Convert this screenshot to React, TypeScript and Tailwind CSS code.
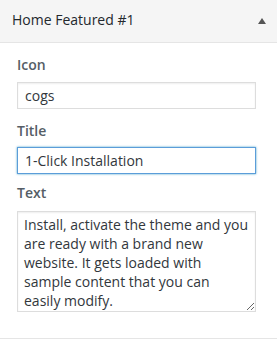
import React from "react";

const font = { fontFamily: '"Open Sans", "Noto Sans", sans-serif' };

export default function App() {
  return (
    <div className="w-[277px] h-[341px] bg-white text-[#32373c]" style={font}>
      <div className="h-[43px] bg-[#f5f5f5] border-b border-[#e5e5e5] flex items-start justify-between pl-[12px] pr-[11px]">
        <h3 className="text-[14px] leading-[20px] mt-[10px] font-normal text-[#23282d]">
          Home Featured #1
        </h3>
        <div className="mt-[18px] w-0 h-0 border-l-[4px] border-r-[4px] border-b-[6px] border-l-transparent border-r-transparent border-b-[#555]" />
      </div>
      <div className="pl-[17px] pr-[21px] pt-[12px] pb-[26px] border-b border-[#e5e5e5]">
        <label className="block text-[14px] leading-[20px] font-semibold text-[#555d66] mb-[7px]">
          Icon
        </label>
        <input
          readOnly
          value="cogs"
          className="block w-full h-[27px] px-[7px] text-[14px] border border-[#ddd] shadow-[inset_0_1px_2px_rgba(0,0,0,0.07)] outline-none text-[#32373c]"
          style={font}
        />
        <label className="block text-[14px] leading-[20px] font-semibold text-[#555d66] mt-[12px] mb-[6px]">
          Title
        </label>
        <input
          readOnly
          value="1-Click Installation"
          className="block w-full h-[27px] px-[7px] text-[14px] border border-[#5b9dd9] shadow-[0_0_2px_rgba(30,140,190,0.8)] outline-none text-[#32373c]"
          style={font}
        />
        <label className="block text-[14px] leading-[20px] font-semibold text-[#555d66] mt-[9px] mb-[8px]">
          Text
        </label>
        <textarea
          readOnly
          rows={5}
          value="Install, activate the theme and you are ready with a brand new website. It gets loaded with sample content that you can easily modify."
          className="block w-full h-[101px] px-[6px] pt-[3px] text-[14px] leading-[19px] border border-[#ddd] shadow-[inset_0_1px_2px_rgba(0,0,0,0.07)] outline-none text-[#32373c] resize-y"
          style={font}
        />
      </div>
    </div>
  );
}
